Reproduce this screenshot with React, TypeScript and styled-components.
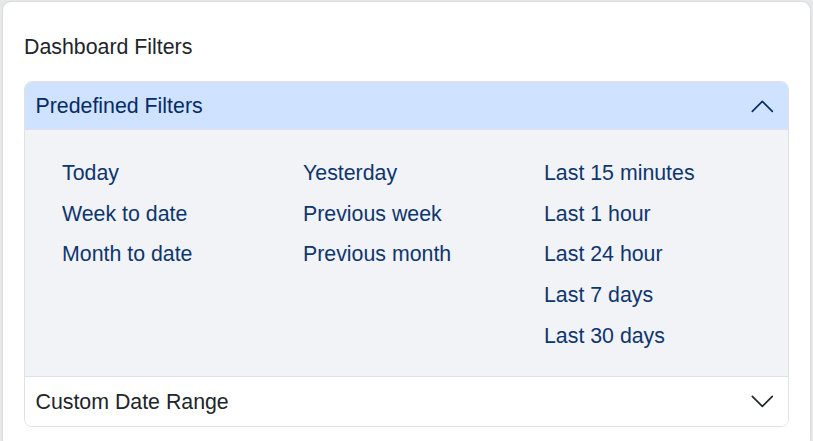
import React, { useState } from "react"
import styled, { createGlobalStyle } from "styled-components"

const GlobalStyle = createGlobalStyle`
  html, body {
    margin: 0;
    padding: 0;
    background: #e7e8ea;
  }
  body {
    font-family: "Liberation Sans", Arial, sans-serif;
    font-size: 21.33px;
    color: #212529;
  }
`

const Card = styled.div`
  margin: 2px 3px 0 3px;
  padding: 33px 21px 21px;
  background: #fff;
  border-radius: 8px;
  box-shadow: 0 0 2px rgba(0, 0, 0, 0.18);
`

const Title = styled.h5`
  margin: 0 0 20px;
  font-size: 21.33px;
  font-weight: 400;
  line-height: 25.6px;
  color: #212529;
`

const Accordion = styled.div`
  border: 1px solid #dee2e6;
  border-radius: 8px;
  overflow: hidden;
`

const Item = styled.div`
  & + & {
    border-top: 1px solid #dee2e6;
  }
`

const Header = styled.button<{ $open: boolean }>`
  display: flex;
  align-items: center;
  justify-content: space-between;
  width: 100%;
  margin: 0;
  padding: 11px 12px 11px 10.5px;
  border: 0;
  font: inherit;
  line-height: 26px;
  text-align: left;
  cursor: pointer;
  background: ${(p) => (p.$open ? "#cfe2ff" : "#fff")};
  color: ${(p) => (p.$open ? "#052c65" : "#212529")};
  box-shadow: ${(p) => (p.$open ? "inset 0 -1px 0 #dee2e6" : "none")};
`

const Chevron = styled.svg<{ $open: boolean }>`
  flex: none;
  width: 26.67px;
  height: 26.67px;
  transform: ${(p) => (p.$open ? "rotate(180deg)" : "none")};
`

const Body = styled.div`
  display: grid;
  grid-template-columns: 241px 241px 1fr;
  padding: 23px 37px 20px;
  background: #f1f3f7;
`

const Column = styled.ul`
  margin: 0;
  padding: 0;
  list-style: none;
`

const FilterLink = styled.a`
  display: block;
  line-height: 40.6px;
  color: #0e366d;
  text-decoration: none;
  cursor: pointer;

  &:hover {
    text-decoration: underline;
  }
`

const columns = [
  ["Today", "Week to date", "Month to date"],
  ["Yesterday", "Previous week", "Previous month"],
  ["Last 15 minutes", "Last 1 hour", "Last 24 hour", "Last 7 days", "Last 30 days"],
]

const Arrow = ({ open, color }: { open: boolean; color: string }) => (
  <Chevron $open={open} viewBox="0 0 16 16" fill="none" stroke={color} strokeLinecap="round" strokeLinejoin="round">
    <path d="M2 5L8 11L14 5" />
  </Chevron>
)

const App = () => {
  const [open, setOpen] = useState<"predefined" | "custom">("predefined")

  return (
    <>
      <GlobalStyle />
      <Card>
        <Title>Dashboard Filters</Title>
        <Accordion>
          <Item>
            <Header $open={open === "predefined"} onClick={() => setOpen("predefined")}>
              Predefined Filters
              <Arrow open={open === "predefined"} color={open === "predefined" ? "#052c65" : "#212529"} />
            </Header>
            {open === "predefined" && (
              <Body>
                {columns.map((col, i) => (
                  <Column key={i}>
                    {col.map((label) => (
                      <li key={label}>
                        <FilterLink>{label}</FilterLink>
                      </li>
                    ))}
                  </Column>
                ))}
              </Body>
            )}
          </Item>
          <Item>
            <Header $open={open === "custom"} onClick={() => setOpen("custom")}>
              Custom Date Range
              <Arrow open={open === "custom"} color={open === "custom" ? "#052c65" : "#212529"} />
            </Header>
          </Item>
        </Accordion>
      </Card>
    </>
  )
}

export default App
